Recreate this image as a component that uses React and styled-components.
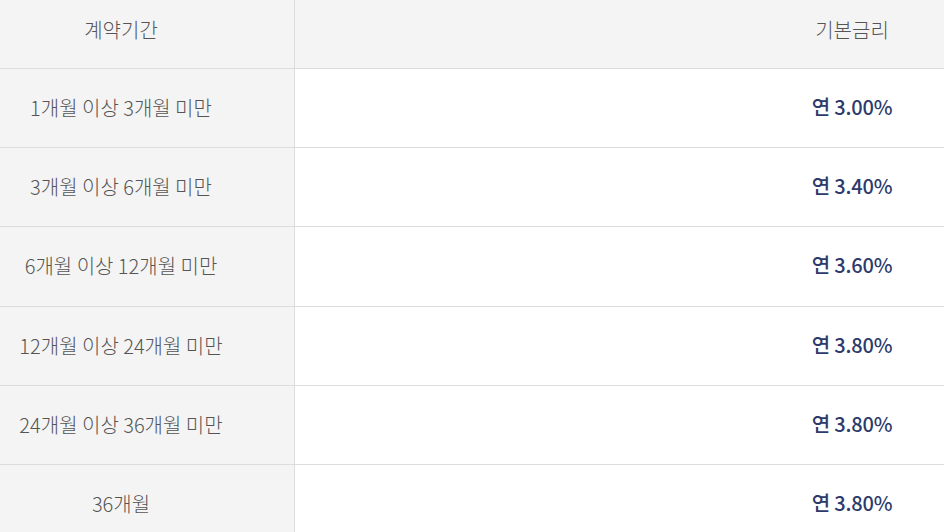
import styled, { createGlobalStyle } from "styled-components";

const GlobalStyle = createGlobalStyle`
  html, body {
    margin: 0;
    padding: 0;
    background: #fff;
    font-family: "Noto Sans CJK KR", "Noto Sans", sans-serif;
  }
`;

const Table = styled.div`
  width: 944px;
  height: 532px;
  overflow: hidden;
  display: grid;
  grid-template-columns: 295px 1fr 184px;
  grid-auto-rows: 79.2px;
  grid-template-rows: 69px;
`;

const Cell = styled.div`
  display: flex;
  align-items: center;
  justify-content: center;
  box-sizing: border-box;
  border-bottom: 1px solid #dcdcdc;
  font-size: 20px;
  white-space: nowrap;
  color: ${(p) => (p.$rate ? "#2d3a6c" : "#555")};
  font-weight: ${(p) => (p.$rate ? 500 : 300)};
  letter-spacing: ${(p) => (p.$rate ? "-0.2px" : "0")};
  background: ${(p) => (p.$gray ? "#f4f4f4" : "#fff")};
  border-right: ${(p) => (p.$divider ? "1px solid #dcdcdc" : "none")};
  padding-right: ${(p) => (p.$divider ? "52px" : "0")};
  padding-bottom: ${(p) => (p.$head ? "10px" : p.$rate ? "3px" : "1px")};
`;

const rows = [
  ["1개월 이상 3개월 미만", "연 3.00%"],
  ["3개월 이상 6개월 미만", "연 3.40%"],
  ["6개월 이상 12개월 미만", "연 3.60%"],
  ["12개월 이상 24개월 미만", "연 3.80%"],
  ["24개월 이상 36개월 미만", "연 3.80%"],
  ["36개월", "연 3.80%"],
];

export default function App() {
  return (
    <>
      <GlobalStyle />
      <Table>
        <Cell $gray $divider $head>계약기간</Cell>
        <Cell $gray $head />
        <Cell $gray $head>기본금리</Cell>
        {rows.map(([term, rate]) => (
          <>
            <Cell key={term + "a"} $gray $divider>{term}</Cell>
            <Cell key={term + "b"} />
            <Cell key={term + "c"} $rate>{rate}</Cell>
          </>
        ))}
      </Table>
    </>
  );
}
